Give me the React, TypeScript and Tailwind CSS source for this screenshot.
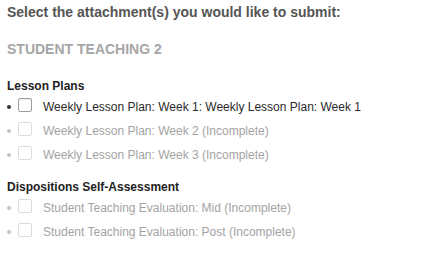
const GROUPS = [
  {
    label: 'Lesson Plans',
    className: 'mt-[19px]',
    items: [
      { text: 'Weekly Lesson Plan: Week 1: Weekly Lesson Plan: Week 1', done: true },
      { text: 'Weekly Lesson Plan: Week 2 (Incomplete)', done: false },
      { text: 'Weekly Lesson Plan: Week 3 (Incomplete)', done: false },
    ],
  },
  {
    label: 'Dispositions Self-Assessment',
    className: 'mt-[12px]',
    items: [
      { text: 'Student Teaching Evaluation: Mid (Incomplete)', done: false },
      { text: 'Student Teaching Evaluation: Post (Incomplete)', done: false },
    ],
  },
]

function AttachmentRow({ text, done }: { text: string; done: boolean }) {
  return (
    <li className="flex h-[24px] items-center">
      <span className={`h-[4px] w-[4px] shrink-0 rounded-full ${done ? 'bg-[#333]' : 'bg-[#c4c4c4]'}`} />
      <span
        className={`mb-[5px] ml-[7px] h-[14px] w-[14px] shrink-0 rounded-[2px] border bg-white ${
          done ? 'border-[#9d9d9d] shadow-[inset_0_1px_1px_rgba(0,0,0,0.08)]' : 'border-[#dcdcdc]'
        }`}
      />
      <span className={`ml-[11px] text-[12px] leading-[24px] ${done ? 'text-[#2a2a2a]' : 'text-[#a3a3a3]'}`}>
        {text}
      </span>
    </li>
  )
}

export default function App() {
  return (
    <div className="h-[253px] w-[428px] bg-white px-[7px] font-['Liberation_Sans',Arial,sans-serif]">
      <p className="pt-[2px] text-[14px] font-bold leading-[20px] text-[#555]">
        Select the attachment(s) you would like to submit:
      </p>
      <p className="mt-[17px] text-[14px] font-bold leading-[20px] text-[#a6a6a6]">STUDENT TEACHING 2</p>

      {GROUPS.map((g) => (
        <div key={g.label} className={g.className}>
          <p className="text-[12px] font-bold leading-[17px] text-[#222]">{g.label}</p>
          <ul>
            {g.items.map((it) => (
              <AttachmentRow key={it.text} text={it.text} done={it.done} />
            ))}
          </ul>
        </div>
      ))}
    </div>
  )
}
